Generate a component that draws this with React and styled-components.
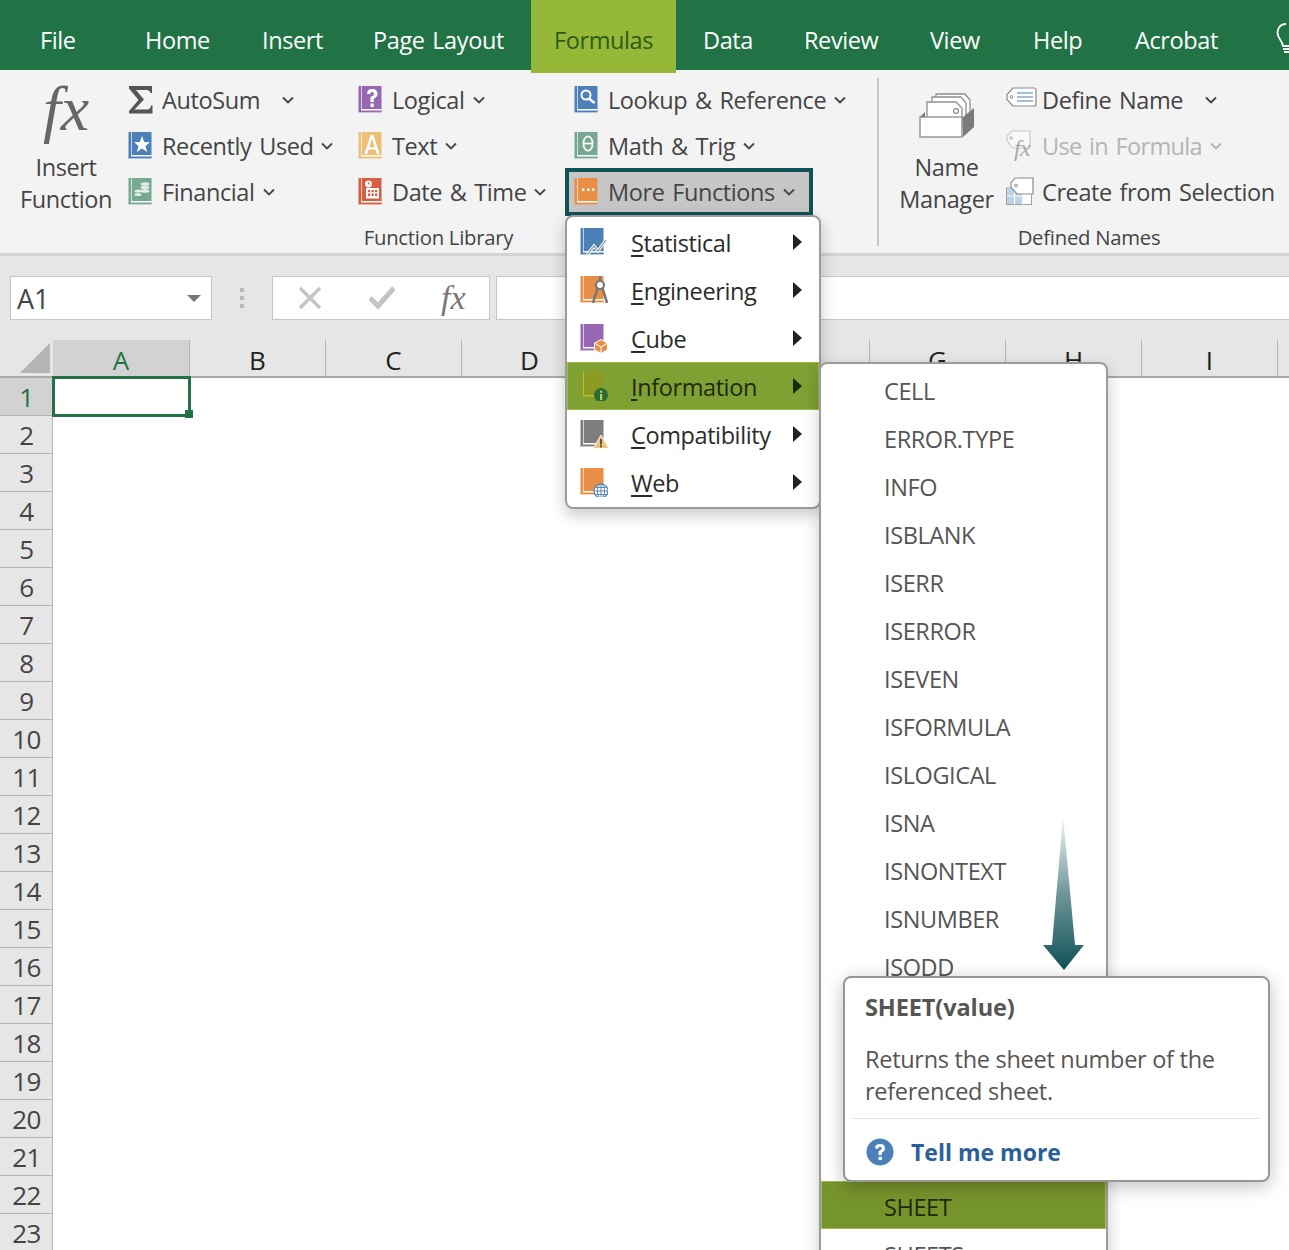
import React from "react";
import styled, { createGlobalStyle } from "styled-components";

const Global = createGlobalStyle`
  html, body { margin: 0; padding: 0; background: #fff; }
  body { font-family: "Open Sans", "Noto Sans", sans-serif; }
  * { box-sizing: border-box; }
`;
const Page = styled.div`position: relative; width: 1289px; height: 1250px; overflow: hidden; background: #fff; color: #444; font-size: 23.5px; letter-spacing: -0.4px; word-spacing: 2px;`;
const TabBar = styled.div`display: flex; height: 70px; background: #217346; padding-left: 17px; position: relative; z-index: 2;`;
const Tab = styled.div`
  flex: none; width: ${p => p.$w}px; margin-left: ${p => p.$ml || 0}px; padding-left: 23px; height: ${p => p.$active ? 73 : 70}px; line-height: 80px; white-space: nowrap;
  color: ${p => p.$active ? "#2f5a17" : "#fff"}; background: ${p => p.$active ? "#95b838" : "transparent"};
`;
const Bulb = styled.svg`position: absolute; left: 1276px; top: 23px;`;
const Ribbon = styled.div`display: flex; height: 186px; background: #f3f3f3; border-bottom: 3px solid #d4d4d4;`;
const Group = styled.div`flex: none; width: ${p => p.$w}px; display: flex; flex-direction: column; height: 183px;`;
const Tools = styled.div`display: flex; height: 151px; padding-top: 7px;`;
const GroupLabel = styled.div`text-align: center; font-size: 20.3px; color: #444; line-height: 28px; letter-spacing: -0.25px; word-spacing: 0; margin-top: 2px;`;
const Divider = styled.div`flex: none; width: 2px; height: 168px; margin-top: 8px; background: #c8c8c8;`;
const Large = styled.div`flex: none; width: ${p => p.$w}px; padding-left: ${p => p.$pl}px; display: flex; flex-direction: column; align-items: center; text-align: center; line-height: 32px; color: #444;`;
const LargeIcon = styled.div`height: 74px; padding-top: ${p => p.$pt || 0}px; display: flex; align-items: flex-start; justify-content: center;`;
const FxMark = styled.span`font-family: "Liberation Serif", serif; font-style: italic; font-size: ${p => p.$s}px; line-height: 1; color: ${p => p.$c}; letter-spacing: 0;`;
const Column = styled.div`flex: none; width: ${p => p.$w}px; display: flex; flex-direction: column;`;
const Item = styled.div`
  display: flex; align-items: center; height: 46px; white-space: nowrap; color: ${p => p.$off ? "#b5b5b5" : "#444"}; letter-spacing: ${p => p.$off ? "-0.65px" : "inherit"};
`;
const IconSlot = styled.span`flex: none; width: ${p => p.$w || 34}px; height: 30px; display: flex; align-items: center;`;
const Chev = styled.svg`flex: none; margin-left: ${p => p.$ml || 8}px;`;
const MoreButton = styled.div`
  display: flex; align-items: center; width: 248px; height: 48px; margin: -1px 0 0 -9px; padding-left: 5px; white-space: nowrap;
  background: #c6c6c6; border: 4px solid #0f5257; color: #444;
`;
const BarArea = styled.div`height: 84px; background: #e6e6e6; display: flex; padding: 20px 0 0 10px; align-items: flex-start;`;
const NameBox = styled.div`flex: none; width: 202px; height: 44px; background: #fff; border: 1px solid #c6c6c6; display: flex; align-items: center; justify-content: space-between; padding: 0 10px 0 6px; color: #444; font-size: 27px; letter-spacing: 0;`;
const Caret = styled.span`width: 0; height: 0; border-left: 7px solid transparent; border-right: 7px solid transparent; border-top: 7px solid #777;`;
const Grip = styled.div`flex: none; width: 4px; height: 20px; margin: 12px 28px 0 28px; background: repeating-linear-gradient(#b9b9b9 0 4px, transparent 4px 8px);`;
const FxBox = styled.div`flex: none; width: 218px; height: 44px; background: #fff; border: 1px solid #c6c6c6; display: flex; align-items: center; padding-left: 24px; gap: 46px;`;
const Input = styled.div`flex: 1; height: 44px; margin-left: 6px; background: #fff; border: 1px solid #c6c6c6; border-right: 0;`;
const HeaderRow = styled.div`display: flex; height: 38px; background: #e6e6e6; border-bottom: 2px solid #a9a9a9;`;
const Corner = styled.div`flex: none; width: 53px; position: relative; overflow: hidden;`;
const CornerMark = styled.div`position: absolute; right: 3px; bottom: 3px; width: 0; height: 0; border-left: 30px solid transparent; border-bottom: 30px solid #b4b4b4;`;
const ColHead = styled.div`
  flex: none; width: ${p => p.$w || 136}px; text-align: center; font-size: 26px; line-height: 41px; overflow: hidden; height: 36px; letter-spacing: 0;
  border-right: 1px solid #b4b4b4; color: ${p => p.$sel ? "#217346" : "#222"}; background: ${p => p.$sel ? "#d2d2d2" : "transparent"};
`;
const Body = styled.div`display: flex;`;
const RowHeads = styled.div`flex: none; width: 53px; display: flex; flex-direction: column;`;
const RowHead = styled.div`
  flex: none; height: 38px; line-height: 38px; text-align: center; font-size: 26px; padding-left: 1px; letter-spacing: -0.6px;
  border-right: 1px solid #b4b4b4; border-bottom: 1px solid #b4b4b4;
  color: ${p => p.$sel ? "#217346" : "#444"}; background: ${p => p.$sel ? "#d2d2d2" : "#e6e6e6"};
`;
const Cells = styled.div`flex: 1; position: relative;`;
const Selection = styled.div`position: absolute; left: -1px; top: -2px; width: 139px; height: 41px; border: 3px solid #217346;`;
const Handle = styled.div`position: absolute; right: -5px; bottom: -4px; width: 8px; height: 8px; background: #217346;`;
const Menu = styled.div`
  position: absolute; left: ${p => p.$x}px; top: ${p => p.$y}px; width: ${p => p.$w}px; height: ${p => p.$h}px; overflow: hidden; z-index: ${p => p.$z};
  background: #fff; border: 2px solid #9b9b9b; border-radius: 8px; padding-top: 1px;
`;
const MenuShadow = styled.div`
  position: absolute; left: ${p => p.$x}px; top: ${p => p.$y}px; width: ${p => p.$w}px; height: ${p => p.$h}px; border-radius: 8px; z-index: ${p => p.$z};
  box-shadow: 0 6px 16px rgba(0,0,0,.22);
`;
const MenuRow = styled.div`
  display: flex; align-items: center; height: 48px; padding: ${p => p.$pt}px 17px 0 ${p => p.$pl}px; white-space: nowrap; position: relative;
  color: ${p => p.$on ? "#1d2a08" : p.$sub ? "#555" : "#2b2b2b"};
  background: ${p => p.$on ? p.$on : "transparent"};
  box-shadow: ${p => p.$on ? "inset 0 0 0 1px #a0bc4e" : "none"};
`;
const MenuIcon = styled.span`flex: none; width: 51px; height: 30px; margin-top: -2px;`;
const Key = styled.span`text-decoration: underline; text-underline-offset: 3px;`;
const SubArrow = styled.span`margin-left: auto; margin-top: -2px; width: 0; height: 0; border-top: 8px solid transparent; border-bottom: 8px solid transparent; border-left: 9px solid ${p => p.$on ? "#1d2a08" : "#222"};`;
const Pointer = styled.svg`position: absolute; left: 1042px; top: 815px; z-index: 5;`;
const Tip = styled.div`
  position: absolute; left: 843px; top: 976px; width: 427px; height: 206px; z-index: 6; background: #fff; border: 2px solid #979797; border-radius: 8px;
  box-shadow: 0 4px 18px rgba(0,0,0,.25); color: #555; padding: 13px 8px 0 8px;
`;
const TipTitle = styled.div`font-weight: 700; line-height: 32px; padding-left: 12px; font-size: 23.5px; letter-spacing: -0.1px;`;
const TipText = styled.div`margin-top: 20px; padding-left: 12px; line-height: 32px; font-size: 23.5px; letter-spacing: -0.28px; word-spacing: 0;`;
const TipRule = styled.div`height: 1px; background: #e0e0e0; margin-top: 11px;`;
const TipLink = styled.div`display: flex; align-items: center; gap: 17px; padding: 17px 0 0 13px; font-weight: 700; color: #2a6099; font-size: 23px; letter-spacing: 0; word-spacing: 0;`;

const Chevron = ({ ml, c = "#444" }) => (
  <Chev $ml={ml} width="12" height="8" viewBox="0 0 12 8"><path d="M1 1.5 L6 6.5 L11 1.5" fill="none" stroke={c} strokeWidth="1.8" /></Chev>
);
const Book = ({ c, children, w = 28, h = 30 }) => (
  <svg width={w} height={h} viewBox="0 0 28 30">
    <rect x="0.5" y="1" width="23" height="26" fill={c} />
    <rect x="3" y="1" width="1" height="23" fill="#fff" fillOpacity=".65" />
    <rect x="3" y="24" width="20.5" height="1.5" fill="#fff" />
    <rect x="0.5" y="26" width="23" height="1.4" fill={c} />
    {children}
  </svg>
);
const Sigma = () => <svg width="28" height="30" viewBox="0 0 28 30"><path d="M1 1 H24 V8 H22.5 Q22 5 18 5 H8 L16 14.5 L6.5 24.5 H19 Q22.5 24.5 23 20.5 H24.5 V28.5 H1 V26 L10.5 15 L1 3.5 Z" fill="#555" /></svg>;
const gl = { fill: "#fff" };
const IStar = () => <Book c="#4c80b8"><path d="M14 5 L16.2 11 L22 11.2 L17.5 15 L19.2 21 L14 17.5 L8.8 21 L10.5 15 L6 11.2 L11.8 11 Z" {...gl} /></Book>;
const ICoins = () => <Book c="#76a892"><ellipse cx="17" cy="7" rx="4.5" ry="1.8" {...gl} fillOpacity=".8"/><ellipse cx="17" cy="10.5" rx="4.5" ry="1.8" {...gl} fillOpacity=".8"/><ellipse cx="17" cy="14" rx="4.5" ry="1.8" {...gl} fillOpacity=".8"/><ellipse cx="10" cy="14" rx="3.5" ry="1.5" {...gl} fillOpacity=".8"/><ellipse cx="10" cy="17.5" rx="3.5" ry="1.5" {...gl} fillOpacity=".8"/></Book>;
const IQ = () => <Book c="#9767b4"><path d="M9 9 Q9 4 14 4 Q19.5 4 19.5 9 Q19.5 12 15.8 13.8 V17 H12.5 V12 Q16 10.8 16 9 Q16 7 14 7 Q12.3 7 12.3 9 Z M12.5 18.5 H15.8 V22 H12.5 Z" {...gl} /></Book>;
const IA = () => <Book c="#eec077"><path d="M6.5 23 L12.5 4 H15.5 L21.5 23 H18.8 L17.4 18.5 H10.6 L9.2 23 Z M11.3 16.3 H16.7 L14 7.6 Z" {...gl} /></Book>;
const ICal = () => <Book c="#d65f42"><circle cx="10.5" cy="7" r="3.4" {...gl}/><path d="M10.5 5 V7 H12.5" stroke="#d65f42" strokeWidth=".8" fill="none"/><path d="M8 11 H21 V21.5 H8 Z" {...gl}/><path d="M10 13 H12.3 V15.3 H10Z M13.5 13 H15.8 V15.3 H13.5Z M17 13 H19.3 V15.3 H17Z M10 16.6 H12.3 V18.9 H10Z M13.5 16.6 H15.8 V18.9 H13.5Z M17 16.6 H19.3 V18.9 H17Z" fill="#d65f42"/></Book>;
const ILook = () => <Book c="#4c80b8"><circle cx="12" cy="10" r="4.5" fill="none" stroke="#fff" strokeWidth="2"/><path d="M15 13.5 L20.5 18" stroke="#fff" strokeWidth="2.4"/></Book>;
const ITheta = () => <Book c="#76a892"><ellipse cx="14" cy="12.5" rx="4.6" ry="7.2" fill="none" stroke="#fff" strokeWidth="1.7"/><path d="M9.5 12.5 H18.5" stroke="#fff" strokeWidth="1.7"/></Book>;
const IDots = () => <Book c="#e88f45"><rect x="8" y="11.5" width="2.4" height="2.4" {...gl}/><rect x="13" y="11.5" width="2.4" height="2.4" {...gl}/><rect x="18" y="11.5" width="2.4" height="2.4" {...gl}/></Book>;
const MStat = () => <Book c="#4c80b8"><path d="M7 28 L14 19 L18 24 L26 13" fill="none" stroke="#fff" strokeWidth="3"/><path d="M7 28 L14 19 L18 24 L26 13" fill="none" stroke="#8f8f8f" strokeWidth="1.2"/></Book>;
const MEng = () => <Book c="#e88f45"><path d="M20 1 V6" stroke="#777" strokeWidth="2.4"/><circle cx="20" cy="10" r="4" fill="#fff" stroke="#777" strokeWidth="2.2"/><path d="M17.5 13 L13 28 M22.5 13 L27 28" stroke="#777" strokeWidth="2.6"/></Book>;
const MCube = () => <Book c="#9767b4"><path d="M21 16 L28 20 V27 L21 31 L14 27 V20 Z" fill="#fff"/><path d="M21 17 L27 20.5 V26.5 L21 30 L15 26.5 V20.5 Z" fill="#e88f45"/><path d="M15 20.5 L21 24 L27 20.5 M21 24 V30" stroke="#fff" strokeWidth="1" fill="none"/></Book>;
const MInfo = () => (
  <svg width="28" height="30" viewBox="0 0 28 30">
    <rect x="0.5" y="1" width="23" height="26" fill="#8c9a24" />
    <rect x="3" y="1" width="1" height="23" fill="#a8c43a" />
    <rect x="3" y="24" width="20.5" height="1.5" fill="#a8c43a" />
    <circle cx="21" cy="24" r="7" fill="#2c6a32" />
    <rect x="20" y="23" width="2.2" height="6" fill="#b4d058" /><rect x="20" y="19.6" width="2.2" height="2.2" fill="#b4d058" />
  </svg>
);
const MWarn = () => <Book c="#7e7e7e"><path d="M21 16 L29 29.5 H13 Z" fill="#f0c679" stroke="#fff" strokeWidth=".8"/><rect x="20" y="20" width="2" height="5.5" fill="#555"/><rect x="20" y="26.3" width="2" height="2" fill="#555"/></Book>;
const MWeb = () => <Book c="#e88f45"><circle cx="21" cy="24" r="7" fill="#fff" stroke="#4c80b8" strokeWidth="1.2"/><path d="M14 24 H28 M21 17 V31 M15.5 20.5 H26.5 M15.5 27.5 H26.5" stroke="#4c80b8" strokeWidth=".9"/><ellipse cx="21" cy="24" rx="3.6" ry="7" fill="none" stroke="#4c80b8" strokeWidth=".9"/></Book>;
const IDefine = () => (
  <svg width="31" height="26" viewBox="0 0 31 26"><path d="M7 1 H28 Q30 1 30 3 V17 Q30 19 28 19 H7 L1 12.5 V7.5 Z" fill="#fff" stroke="#8a8a8a" strokeWidth="1.2"/><circle cx="5.5" cy="10" r="1.4" fill="none" stroke="#888"/><path d="M11 6 H27 M11 10 H27 M11 14 H27" stroke="#4c80b8" strokeWidth="1.2"/></svg>
);
const IUse = () => (
  <svg width="28" height="32" viewBox="0 0 28 32"><path d="M6 1 H24 V18 H6 L1 10 V6 Z" fill="#f8f8f8" stroke="#c8c8c8" strokeWidth="1.2"/><circle cx="5" cy="8" r="1.4" fill="none" stroke="#bbb"/><text x="8" y="26" fontFamily="Liberation Serif" fontStyle="italic" fontSize="24" fill="#a8a8a8">fx</text></svg>
);
const ICreate = () => (
  <svg width="28" height="30" viewBox="0 0 28 30"><rect x="0.5" y="11" width="25" height="16.5" fill="#fff" stroke="#a0a0a0"/><rect x="1" y="11.5" width="15" height="15.5" fill="#bcd2e8"/><path d="M8.5 11 V27.5 M16.5 11 V27.5 M1 19 H25" stroke="#fff" strokeWidth="1.2"/><path d="M9 1 H27 V17 H11 L5 10.5 V6 Z" fill="#fff" stroke="#8a8a8a" strokeWidth="1.2"/><circle cx="10" cy="8.5" r="1.4" fill="none" stroke="#888"/></svg>
);
const IManager = () => (
  <svg width="56" height="48" viewBox="0 0 56 48">
    <path d="M17 3 H46 L51 9 V30 H17 Z" fill="#fff" stroke="#8f8f8f" strokeWidth="1.3"/>
    <path d="M13 6 H42 L47 12 V32 H13 Z" fill="#fff" stroke="#8f8f8f" strokeWidth="1.3"/>
    <path d="M8 11 H37 L43 17 V36 H8 Z" fill="#fff" stroke="#8f8f8f" strokeWidth="1.3"/>
    <circle cx="37" cy="20" r="2.4" fill="none" stroke="#888" strokeWidth="1.2"/>
    <path d="M1 26 L6 21 V26Z" fill="#777"/>
    <path d="M44 46 L55 36 V17 L44 26 Z" fill="#7b7b7b"/>
    <rect x="1" y="26" width="42" height="20" fill="#fff" stroke="#8a8a8a" strokeWidth="1.3"/>
  </svg>
);
const X = () => <svg width="26" height="26" viewBox="0 0 26 26"><path d="M3 3 L23 23 M23 3 L3 23" stroke="#c4c4c4" strokeWidth="3.4"/></svg>;
const Check = () => <svg width="26" height="26" viewBox="0 0 26 26"><path d="M1 13 L9 21 L25 3" fill="none" stroke="#c4c4c4" strokeWidth="5"/></svg>;

const tabs = [["File",105],["Home",117],["Insert",111],["Page Layout",181],["Formulas",145,true],["Data",101,false,4],["Review",126],["View",103],["Help",102],["Acrobat",140]];
const cols = [["A",137,true],["B"],["C"],["D"],["E"],["F",136],["G"],["H"],["I"],["",12]];
const menu1 = [
  ["S","tatistical",MStat],["E","ngineering",MEng],["C","ube",MCube],["I","nformation",MInfo,true],["C","ompatibility",MWarn],["W","eb",MWeb],
];
const menu2 = ["CELL","ERROR.TYPE","INFO","ISBLANK","ISERR","ISERROR","ISEVEN","ISFORMULA","ISLOGICAL","ISNA","ISNONTEXT","ISNUMBER","ISODD","ISREF","ISTEXT","N","NA","SHEET","SHEETS","TYPE"];

export default function App() {
  return (
    <Page>
      <Global />
      <TabBar>
        {tabs.map(([t, w, a, ml]) => <Tab key={t} $w={w} $active={a} $ml={ml}>{t}</Tab>)}
        <Bulb width="20" height="34" viewBox="0 0 20 34"><path d="M10 1 C3 1 1.5 7 1.5 10 C1.5 15 6 17 7 23 H19 M7 26 H20 M8 29 H20" fill="none" stroke="#fff" strokeWidth="1.8"/></Bulb>
      </TabBar>
      <Ribbon>
        <Group $w={877}>
          <Tools>
            <Large $w={128} $pl={4}>
              <LargeIcon><FxMark $s={64} $c="#666">fx</FxMark></LargeIcon>
              <span>Insert</span><span>Function</span>
            </Large>
            <Column $w={230}>
              <Item><IconSlot><Sigma /></IconSlot>AutoSum<Chevron ml={22} /></Item>
              <Item><IconSlot><IStar /></IconSlot>Recently Used<Chevron /></Item>
              <Item><IconSlot><ICoins /></IconSlot>Financial<Chevron /></Item>
            </Column>
            <Column $w={216}>
              <Item><IconSlot><IQ /></IconSlot>Logical<Chevron /></Item>
              <Item><IconSlot><IA /></IconSlot>Text<Chevron /></Item>
              <Item><IconSlot><ICal /></IconSlot>Date &amp; Time<Chevron /></Item>
            </Column>
            <Column $w={300}>
              <Item><IconSlot><ILook /></IconSlot>Lookup &amp; Reference<Chevron /></Item>
              <Item><IconSlot><ITheta /></IconSlot>Math &amp; Trig<Chevron /></Item>
              <MoreButton><IconSlot><IDots /></IconSlot>More Functions<Chevron /></MoreButton>
            </Column>
          </Tools>
          <GroupLabel>Function Library</GroupLabel>
        </Group>
        <Divider />
        <Group $w={420}>
          <Tools>
            <Large $w={127} $pl={8}>
              <LargeIcon $pt={14}><IManager /></LargeIcon>
              <span>Name</span><span>Manager</span>
            </Large>
            <Column $w={293}>
              <Item><IconSlot $w={36}><IDefine /></IconSlot>Define Name<Chevron ml={22} /></Item>
              <Item $off><IconSlot $w={36}><IUse /></IconSlot>Use in Formula<Chevron c="#b5b5b5" /></Item>
              <Item><IconSlot $w={36}><ICreate /></IconSlot>Create from Selection</Item>
            </Column>
          </Tools>
          <GroupLabel>Defined Names</GroupLabel>
        </Group>
      </Ribbon>
      <BarArea>
        <NameBox>A1<Caret /></NameBox>
        <Grip />
        <FxBox><X /><Check /><FxMark $s={34} $c="#777">fx</FxMark></FxBox>
        <Input />
      </BarArea>
      <HeaderRow>
        <Corner><CornerMark /></Corner>
        {cols.map(([c, w, s], i) => <ColHead key={i} $w={w} $sel={s}>{c}</ColHead>)}
      </HeaderRow>
      <Body>
        <RowHeads>
          {Array.from({ length: 24 }, (_, i) => <RowHead key={i} $sel={i === 0}>{i + 1}</RowHead>)}
        </RowHeads>
        <Cells><Selection><Handle /></Selection></Cells>
      </Body>

      <MenuShadow $x={565} $y={215} $w={256} $h={294} $z={3} />
      <Menu $x={565} $y={215} $w={256} $h={294} $z={3}>
        {menu1.map(([k, r, I, on]) => {
          const Ic = I;
          return (
            <MenuRow key={k + r} $pl={13} $pt={2} $on={on ? "#7fa032" : null}>
              <MenuIcon><Ic /></MenuIcon><span><Key>{k}</Key>{r}</span><SubArrow $on={on} />
            </MenuRow>
          );
        })}
      </Menu>
      <MenuShadow $x={819} $y={362} $w={289} $h={920} $z={4} />
      <Menu $x={819} $y={362} $w={289} $h={920} $z={4}>
        {menu2.map(n => (
          <MenuRow key={n} $sub $pl={63} $pt={4} $on={n === "SHEET" ? "#76942c" : null}><span>{n}</span></MenuRow>
        ))}
      </Menu>
      <Pointer width="44" height="156" viewBox="0 0 44 156">
        <defs><linearGradient id="pg" x1="0" y1="0" x2="0" y2="1"><stop offset="0" stopColor="#0f5257" stopOpacity=".05"/><stop offset=".5" stopColor="#0f5257" stopOpacity=".6"/><stop offset="1" stopColor="#0f5257"/></linearGradient></defs>
        <path d="M21 1 L33 130 H42 L22 155 L1 130 H10 Z" fill="url(#pg)" />
      </Pointer>
      <Tip>
        <TipTitle>SHEET(value)</TipTitle>
        <TipText>Returns the sheet number of the<br />referenced sheet.</TipText>
        <TipRule />
        <TipLink>
          <svg width="28" height="28" viewBox="0 0 28 28"><circle cx="14" cy="14" r="13.5" fill="#4c80b8"/><path d="M9 10.5 Q9 6 14 6 Q19 6 19 10.3 Q19 13 15.8 14.6 V17 H12.6 V13 Q15.7 12 15.7 10.4 Q15.7 8.8 14 8.8 Q12.2 8.8 12.2 10.7 Z M12.6 18.8 H15.8 V22 H12.6 Z" fill="#fff"/></svg>
          Tell me more
        </TipLink>
      </Tip>
    </Page>
  );
}
